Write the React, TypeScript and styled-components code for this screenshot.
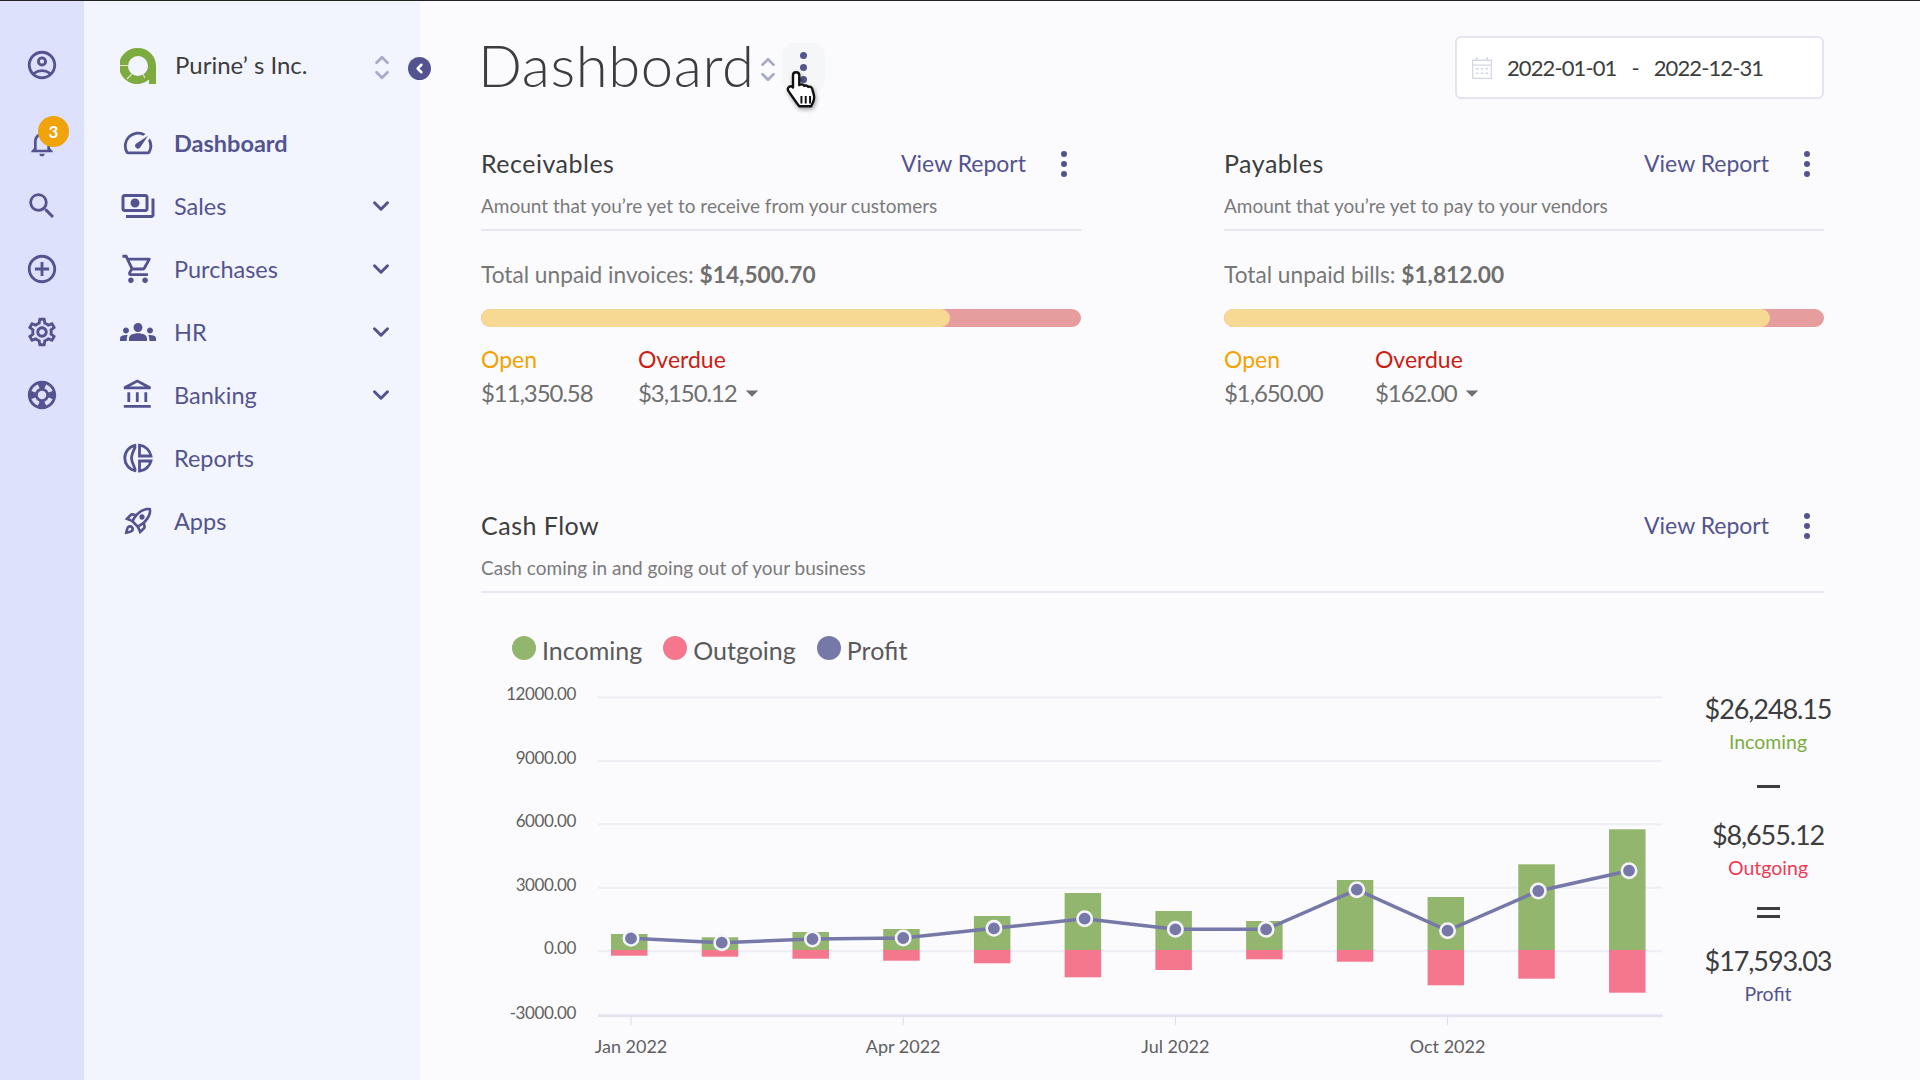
import React from "react";
import styled, { createGlobalStyle } from "styled-components";
import { ChevronDown, ChevronLeft, ChevronUp } from "lucide-react";
import {
  MdOutlineAccountCircle,
  MdOutlineNotifications,
  MdSearch,
  MdOutlineAddCircleOutline,
  MdOutlineSettings,
  MdSupport,
  MdOutlineSpeed,
  MdOutlinePayments,
  MdOutlineShoppingCart,
  MdGroups,
  MdOutlineAccountBalance,
  MdOutlineRocketLaunch,
  MdArrowDropDown,
} from "react-icons/md";

const INDIGO = "#53548f";
const FONT = `Lato, "Open Sans", sans-serif`;

const GlobalStyle = createGlobalStyle`
  * { box-sizing: border-box; }
  html, body { margin: 0; padding: 0; height: 100%; overflow: hidden; }
  body { background: #fbfbfe; font-family: ${FONT}; color: #3d3d3d; }
`;

const Page = styled.div`
  width: 1920px; height: 1080px;
  border-top: 1px solid #222;
  display: grid; grid-template-columns: 84px 336px 1fr;
  overflow: hidden;
`;

const Rail = styled.nav`
  background: #dde1fb;
  padding-top: 32px;
  display: flex; flex-direction: column; align-items: center;
`;

const RailItem = styled.div`
  position: relative;
  width: 84px; height: 63px;
  display: flex; align-items: center; justify-content: center;
  color: ${INDIGO};
  &:first-child { margin-bottom: 15px; }
`;

const Badge = styled.span`
  position: absolute; left: 38px; top: 5px;
  width: 31px; height: 31px; border-radius: 50%;
  background: #f0a30a; color: #fff;
  font-size: 17px; font-weight: 700;
  display: flex; align-items: center; justify-content: center;
`;

const Sidebar = styled.aside`
  position: relative;
  background: #f3f5fe;
  padding-top: 33px;
`;

const Brand = styled.div`
  height: 63px; padding: 0 26px 0 36px;
  display: flex; align-items: center; gap: 19px;
`;

const BrandName = styled.span`
  flex: 1; font-size: 24px; font-weight: 400; color: #3d3d3d; margin-top: -2px;
`;

const SortIcon = styled.span`
  width: 24px; margin-top: 3px;
  display: flex; flex-direction: column; align-items: center;
  color: #a9abc9;
  svg { width: 22px; height: 22px; margin: -3.500px 0; }
`;

const CollapseButton = styled.button`
  position: absolute; right: -11px; top: 56px;
  width: 23px; height: 23px; padding: 0; border: 0; border-radius: 50%;
  background: ${INDIGO}; color: #fff;
  display: flex; align-items: center; justify-content: center;
`;

const NavList = styled.ul`
  list-style: none; margin: 14px 0 0; padding: 0;
`;

const NavRow = styled.li<{ $active?: boolean }>`
  height: 63px; padding: 0 26px 0 36px;
  display: flex; align-items: center; gap: 18px;
  color: ${INDIGO};
  font-size: 23.500px; font-weight: ${p => (p.$active ? 700 : 400)};
`;

const NavIcon = styled.span`
  width: 36px; height: 36px; flex-shrink: 0;
  display: flex; align-items: center; justify-content: center;
`;

const NavLabel = styled.span`
  flex: 1;
`;

const Main = styled.main`
  padding: 35px 0 0 61px;
  width: 1404px;
`;

const TopBar = styled.header`
  height: 63px; width: 1343px;
  display: flex; align-items: center; justify-content: space-between;
`;

const TitleGroup = styled.div`
  display: flex; align-items: center;
`;

const PageTitle = styled.h1`
  margin: -7px 1px 0 -3px;
  font-size: 58px; font-weight: 300; color: #3d3d3d; letter-spacing: 0.6px;
`;

const HoverButton = styled.div`
  position: relative;
  width: 43px; height: 49px; margin-left: 2px;
  background: #f4f6f8; border-radius: 12px;
  display: flex; align-items: center; justify-content: center;
`;

const Cursor = styled.svg`
  position: absolute; left: 3px; top: 26px;
  filter: drop-shadow(1px 2px 2px rgba(0,0,0,.35));
`;

const Kebab = styled.span<{ $gap: number; $dot: number }>`
  display: flex; flex-direction: column; gap: ${p => p.$gap}px;
  i { display: block; width: ${p => p.$dot}px; height: ${p => p.$dot}px; border-radius: 50%; background: ${INDIGO}; }
`;

const DateBox = styled.div`
  width: 369px; height: 63px;
  background: #fff; border: 2px solid #e3e4f0; border-radius: 6px;
  padding-left: 15px;
  display: flex; align-items: center; gap: 15px;
  font-size: 22px; color: #3d3d3d;
`;

const DateRange = styled.span`
  display: flex; gap: 15px;
  letter-spacing: -0.900px;
`;

const TwoColumns = styled.div`
  width: 1343px; margin-top: 45px;
  display: grid; grid-template-columns: 600px 600px; justify-content: space-between;
`;

const CardHeader = styled.div`
  height: 40px;
  display: flex; align-items: center;
`;

const CardTitle = styled.h2`
  flex: 1; margin: -2px 0 0;
  font-size: 25px; font-weight: 400; color: #3d3d3d; letter-spacing: 0.500px;
`;

const ViewReport = styled.a`
  font-size: 23px; color: ${INDIGO}; margin-top: -2px;
`;

const KebabSlot = styled.span`
  width: 37px; margin-left: 18px;
  display: flex; justify-content: center;
  position: relative; left: 1px;
`;

const CardSub = styled.p`
  margin: 10px 0 0; padding-bottom: 11px;
  border-bottom: 2px solid #e8e6f0;
  font-size: 19px; line-height: 24px; color: #7a7a7a;
`;

const TotalLine = styled.div`
  margin-top: 30px;
  font-size: 22.700px; line-height: 28px; color: #777;
  b { font-weight: 700; color: #6f6f6f; }
`;

const Bar = styled.div`
  margin-top: 20px; height: 18px; border-radius: 9px;
  background: #e69d9d; overflow: hidden;
`;

const BarFill = styled.div`
  height: 100%; border-radius: 9px; background: #f8d994;
`;

const Amounts = styled.div`
  margin-top: 18px;
  display: flex;
`;

const AmountCol = styled.div<{ $width?: number }>`
  ${p => (p.$width ? `width: ${p.$width}px;` : "")}
`;

const AmountLabel = styled.div<{ $color: string }>`
  font-size: 23px; line-height: 28px; color: ${p => p.$color};
`;

const AmountValue = styled.div`
  margin-top: 5px;
  display: flex; align-items: center;
  font-size: 24px; line-height: 30px; color: #6f6f6f; letter-spacing: -1.100px;
`;

const CashFlow = styled.section`
  margin-top: 98px; width: 1343px;
`;

const Legend = styled.div`
  margin: 42px 0 0 31px; height: 30px;
  display: flex; gap: 21px;
`;

const LegendItem = styled.div`
  display: flex; align-items: center; gap: 6px;
  font-size: 25px; color: #5a5a5a; line-height: 28px;
`;

const LegendDot = styled.span<{ $color: string }>`
  width: 24px; height: 24px; border-radius: 50%;
  background: ${p => p.$color}; margin-top: -4px;
`;

const ChartRow = styled.div`
  display: flex; margin-top: 5px;
`;

const ChartSvg = styled.svg`
  flex-shrink: 0; display: block;
  text { font-family: ${FONT}; fill: #5f5f5f; }
`;

const Summary = styled.div`
  width: 194px; flex-shrink: 0; padding-top: 22px;
  display: flex; flex-direction: column; align-items: center;
`;

const SummaryValue = styled.div`
  font-size: 27px; line-height: 34px; color: #3d3d3d; letter-spacing: -1.100px;
`;

const SummaryLabel = styled.div<{ $color: string }>`
  margin-top: 4px; margin-bottom: 1px;
  font-size: 19.500px; line-height: 24px; color: ${p => p.$color};
`;

const Operator = styled.div`
  height: 63px;
  display: flex; flex-direction: column; align-items: center; justify-content: center; gap: 5px;
  i { display: block; width: 23px; height: 3px; background: #3d3d3d; }
`;

const Logo = () => (
  <svg width="36" height="36" viewBox="0 0 36 36">
    <path
      d="M18 0a18 18 0 0 1 18 18v18h-7v-4.600A18 18 0 1 1 18 0Zm0 8a10 10 0 1 0 0 20 10 10 0 0 0 0-20Z"
      fill="#7dab40"
    />
    <path d="M0 17.500h8M7 31l5-5M25 30l-2.500-4.500" stroke="#dfe8c8" strokeWidth="1.200" />
  </svg>
);

const ReportsIcon = () => (
  <svg width="30" height="30" viewBox="0 0 30 30" fill="none" stroke={INDIGO} strokeWidth="2.800">
    <path d="M12 2.300A13 13 0 0 0 12 27.700C13 24.500 8.500 21 8.500 15S13 5.500 12 2.300Z" />
    <path d="M16.500 2.200A13 13 0 0 1 28 13H16.500Z" />
    <path d="M16.500 18H28A13 13 0 0 1 16.500 28Z" />
  </svg>
);

const HandCursor = () => (
  <Cursor width="35" height="41" viewBox="0 0 32 38">
    <path
      d="M10 3c1.800 0 3 1.300 3 3v9l1-.4c1.500-.6 3 0 3.600 1 1.300-.7 3-.3 3.700 1 1.400-.6 3.100.100 3.600 1.500l1.500 5.400c.8 3 .3 6-1.200 8.500l-1.200 2.500H13l-2-2.500L3 20.500c-1-1.300-.8-3 .5-3.900 1.200-.8 2.800-.5 3.700.6V6c0-1.700 1-3 2.800-3Z"
      fill="#fff"
      stroke="#111"
      strokeWidth="2.200"
      strokeLinejoin="round"
    />
    <path d="M15 25v7M19 25v7M23 25v7" stroke="#111" strokeWidth="1.800" />
  </Cursor>
);

const CalendarIcon = () => (
  <svg width="20" height="22" viewBox="0 0 20 22" fill="#d3d6e6">
    <path d="M4 0h1.500v2.500H14.500V0H16v2.500h4V22H0V2.500h4Zm-2.800 4v3.500h17.600V4ZM1.200 8.700v12.100h17.600V8.700Z" />
    <path d="M4 11h2.500v1.500H4ZM8.700 11h2.500v1.500H8.700ZM13.500 11H16v1.500h-2.500ZM4 15.500h2.500V17H4ZM8.700 15.500h2.500V17H8.700ZM13.500 15.500H16V17h-2.500Z" />
  </svg>
);

const navItems = [
  { label: "Dashboard", icon: <MdOutlineSpeed size={34} />, active: true },
  { label: "Sales", icon: <MdOutlinePayments size={36} />, more: true },
  { label: "Purchases", icon: <MdOutlineShoppingCart size={34} />, more: true },
  { label: "HR", icon: <MdGroups size={36} />, more: true },
  { label: "Banking", icon: <MdOutlineAccountBalance size={34} />, more: true },
  { label: "Reports", icon: <ReportsIcon /> },
  { label: "Apps", icon: <MdOutlineRocketLaunch size={32} /> },
];

const cards = [
  {
    title: "Receivables",
    sub: "Amount that you’re yet to receive from your customers",
    totalLabel: "Total unpaid invoices:",
    total: "$14,500.70",
    percent: 78.2,
    open: "$11,350.58",
    openWidth: 157,
    overdue: "$3,150.12",
  },
  {
    title: "Payables",
    sub: "Amount that you’re yet to pay to your vendors",
    totalLabel: "Total unpaid bills:",
    total: "$1,812.00",
    percent: 91,
    open: "$1,650.00",
    openWidth: 151,
    overdue: "$162.00",
  },
];

// top of green bar, bottom of red bar, profit point: page coordinates
const months = [
  [934, 955.7, 938.3], [937.3, 956.7, 942.7], [932, 958.7, 939], [929, 960.7, 938],
  [916, 963.3, 928.3], [893, 977.3, 918.7], [911, 970, 929.3], [921, 959.3, 929.3],
  [880, 961.7, 889.7], [897, 985.3, 930.7], [864.3, 978.7, 891], [829.3, 992.7, 870.7],
];
const gridLines = [
  { y: 697.3, label: "12000.00" }, { y: 761, label: "9000.00" }, { y: 824.3, label: "6000.00" },
  { y: 887.7, label: "3000.00" }, { y: 951.3, label: "0.00" }, { y: 1015.7, label: "-3000.00" },
];
const ticks = [
  { i: 0, label: "Jan 2022" }, { i: 3, label: "Apr 2022" }, { i: 6, label: "Jul 2022" }, { i: 9, label: "Oct 2022" },
];
const monthX = (i: number) => 631 + i * 90.73;

const Chart = () => (
  <ChartSvg width="1190" height="400" viewBox="481 670 1190 400">
    {gridLines.map(g => (
      <g key={g.label}>
        <line x1="598" x2="1662.500" y1={g.y} y2={g.y} stroke={g.y > 1000 ? "#e4e4ee" : "#eeeef5"} strokeWidth={g.y > 1000 ? 3 : 2} />
        <text x="576" y={g.y + 3} textAnchor="end" fontSize="17" letterSpacing="-0.400">{g.label}</text>
      </g>
    ))}
    {ticks.map(t => (
      <g key={t.label}>
        <line x1={monthX(t.i)} x2={monthX(t.i)} y1="1016" y2="1025" stroke="#dcdce6" strokeWidth="1" />
        <text x={monthX(t.i)} y="1053" textAnchor="middle" fontSize="18">{t.label}</text>
      </g>
    ))}
    {months.map(([top, bottom], i) => (
      <g key={i}>
        <rect x={monthX(i) - 20} y={top} width="36.500" height={950 - top} fill="#92b66d" />
        <rect x={monthX(i) - 20} y="950" width="36.500" height={bottom - 950} fill="#f4778d" />
      </g>
    ))}
    <polyline
      points={months.map(([, , p], i) => `${monthX(i)},${p}`).join(" ")}
      fill="none" stroke="#7678a8" strokeWidth="3.500"
    />
    {months.map(([, , p], i) => (
      <circle key={i} cx={monthX(i)} cy={p} r="7.200" fill="#7678a8" stroke="#f4f4fa" strokeWidth="2.600" />
    ))}
  </ChartSvg>
);

const Dots = ({ gap = 4, dot = 6 }: { gap?: number; dot?: number }) => (
  <Kebab $gap={gap} $dot={dot}><i /><i /><i /></Kebab>
);

const App = () => (
  <>
    <GlobalStyle />
    <Page>
      <Rail>
        <RailItem><MdOutlineAccountCircle size={34} /></RailItem>
        <RailItem>
          <MdOutlineNotifications size={32} />
          <Badge>3</Badge>
        </RailItem>
        <RailItem><MdSearch size={34} /></RailItem>
        <RailItem><MdOutlineAddCircleOutline size={34} /></RailItem>
        <RailItem><MdOutlineSettings size={34} /></RailItem>
        <RailItem><MdSupport size={34} /></RailItem>
      </Rail>
      <Sidebar>
        <Brand>
          <Logo />
          <BrandName>Purine&#8217; s Inc.</BrandName>
          <SortIcon>
            <ChevronUp strokeWidth={3} />
            <ChevronDown strokeWidth={3} />
          </SortIcon>
        </Brand>
        <CollapseButton><ChevronLeft size={15} strokeWidth={4} /></CollapseButton>
        <NavList>
          {navItems.map(item => (
            <NavRow key={item.label} $active={item.active}>
              <NavIcon>{item.icon}</NavIcon>
              <NavLabel>{item.label}</NavLabel>
              {item.more ? <ChevronDown size={26} strokeWidth={2.800} /> : null}
            </NavRow>
          ))}
        </NavList>
      </Sidebar>
      <Main>
        <TopBar>
          <TitleGroup>
            <PageTitle>Dashboard</PageTitle>
            <SortIcon>
              <ChevronUp strokeWidth={3} />
              <ChevronDown strokeWidth={3} />
            </SortIcon>
            <HoverButton>
              <Dots gap={5} dot={7} />
              <HandCursor />
            </HoverButton>
          </TitleGroup>
          <DateBox>
            <CalendarIcon />
            <DateRange>
              <span>2022-01-01</span>
              <span>-</span>
              <span>2022-12-31</span>
            </DateRange>
          </DateBox>
        </TopBar>
        <TwoColumns>
          {cards.map(card => (
            <section key={card.title}>
              <CardHeader>
                <CardTitle>{card.title}</CardTitle>
                <ViewReport>View Report</ViewReport>
                <KebabSlot><Dots /></KebabSlot>
              </CardHeader>
              <CardSub>{card.sub}</CardSub>
              <TotalLine>{card.totalLabel} <b>{card.total}</b></TotalLine>
              <Bar><BarFill style={{ width: `${card.percent}%` }} /></Bar>
              <Amounts>
                <AmountCol $width={card.openWidth}>
                  <AmountLabel $color="#f3a200">Open</AmountLabel>
                  <AmountValue>{card.open}</AmountValue>
                </AmountCol>
                <AmountCol>
                  <AmountLabel $color="#cc1d12">Overdue</AmountLabel>
                  <AmountValue>{card.overdue}<MdArrowDropDown size={30} /></AmountValue>
                </AmountCol>
              </Amounts>
            </section>
          ))}
        </TwoColumns>
        <CashFlow>
          <CardHeader>
            <CardTitle>Cash Flow</CardTitle>
            <ViewReport>View Report</ViewReport>
            <KebabSlot><Dots /></KebabSlot>
          </CardHeader>
          <CardSub>Cash coming in and going out of your business</CardSub>
          <Legend>
            <LegendItem><LegendDot $color="#92b66d" />Incoming</LegendItem>
            <LegendItem><LegendDot $color="#f4778d" />Outgoing</LegendItem>
            <LegendItem><LegendDot $color="#7678a8" />Profit</LegendItem>
          </Legend>
          <ChartRow>
            <Chart />
            <Summary>
              <SummaryValue>$26,248.15</SummaryValue>
              <SummaryLabel $color="#7dab40">Incoming</SummaryLabel>
              <Operator><i /></Operator>
              <SummaryValue>$8,655.12</SummaryValue>
              <SummaryLabel $color="#ee3b55">Outgoing</SummaryLabel>
              <Operator><i /><i /></Operator>
              <SummaryValue>$17,593.03</SummaryValue>
              <SummaryLabel $color={INDIGO}>Profit</SummaryLabel>
            </Summary>
          </ChartRow>
        </CashFlow>
      </Main>
    </Page>
  </>
);

export default App;
